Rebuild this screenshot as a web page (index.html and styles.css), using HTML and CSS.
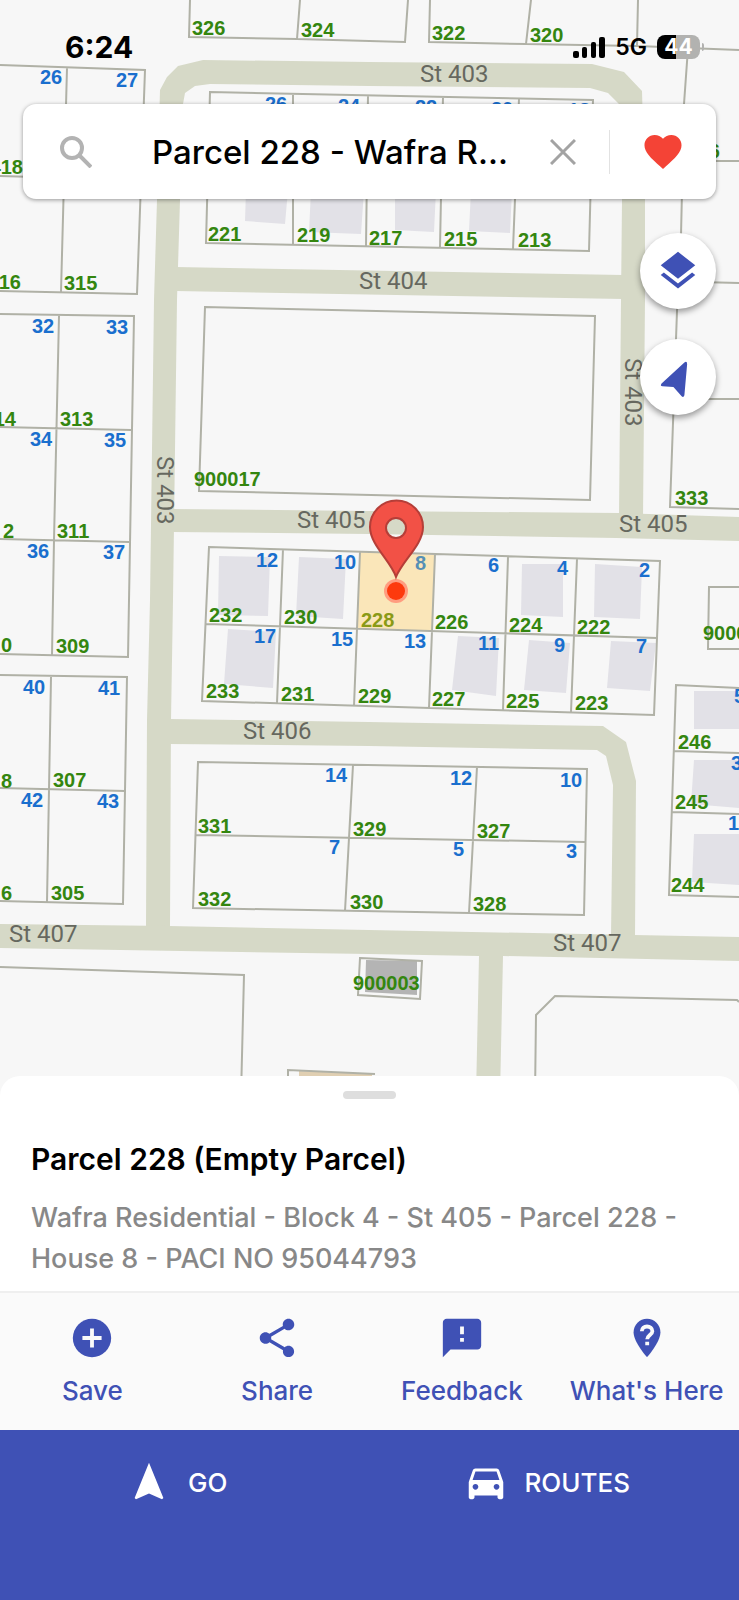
FILE: index.html
```html
<!DOCTYPE html>
<html lang="en">
<head>
<meta charset="utf-8">
<meta name="viewport" content="width=device-width, initial-scale=1">
<title>Parcel 228</title>
<link rel="stylesheet" href="styles.css">
</head>
<body>
<div class="app">
  <main class="map">
    <svg class="map-canvas" viewBox="0 0 739 1096" preserveAspectRatio="xMidYMin slice" role="img" aria-label="Parcel map">
      <g class="road">
        <path d="M160 90 167 77 178 66 203 60 369 62 592 64 624 72 642 91 645 200 645 300 643 518H619L621 300 622 200 619 104 608 93 590 88 369 86 210 84 195 86 185 93 183 104 180 200 177 300 173 600 171 720 170 926H146L147 720 150 600 154 300 157 200Z"/>
        <path d="M176 267 623 275V299L176 291Z"/>
        <path d="M172 509 369 511 619 513 739 517V541L616 538 369 534 172 532Z"/>
        <path d="M169 719 369 722 603 726 626 742 636 781 635 936H611L613 785 606 756 597 750 369 746 169 744Z"/>
        <path d="M0 924 169 926 369 930 634 935 739 937V961L503 956 500 1096H476L479 956 369 954 0 948Z"/>
      </g>
      <g class="building">
        <path d="M246 190H288L285 224 245 221ZM311 190H364L361 234 309 232ZM395 190H436L434 232 395 230ZM471 190H512L510 233 469 231Z"/>
        <path d="M219 556 270 557 268 616 218 615ZM299 557 346 559 343 619 296 616ZM228 629 276 632 273 688 224 684ZM522 564H563V617L521 615ZM595 564 642 567 640 619 594 617ZM458 636 499 638 496 696 452 690ZM529 640 570 643 566 693 524 690ZM611 641 656 643 650 691 607 688Z"/>
        <path d="M694 691H739V729H694ZM694 760H739V808L691 804ZM694 834H739V885L692 882Z"/>
      </g>
      <path class="block" d="M366 960 417 961V995L365 992Z"/>
      <path class="canopy" d="M299 1071 372 1074V1096H299Z"/>
      <path class="selected" d="M360 552 435 555 432 631 357 628Z"/>
      <g class="line">
        <path d="M190 0 189 37 297 39 405 42 408 0M300 0 297 39M430 0 429 42 526 44 637 46 739 50M531 0 526 44M638 0 637 46"/>
        <path d="M688 48 684 104 681 235 677 311 670 507 739 509M700 161H739M700 282 739 283M700 399H739"/>
        <path d="M0 65 145 70 137 294 0 291M67 68 61 292M0 176 141 180"/>
        <path d="M0 314 134 316 128 657 0 654M59 316 54 540 52 655M0 427 131 430M0 539 129 542"/>
        <path d="M0 675 127 677 123 904 0 901M51 677 47 902M0 788 125 791"/>
        <path d="M210 92 593 100 589 251 206 243ZM293 94V245M368 95 366 246M443 97 440 247M519 99 513 249"/>
        <path d="M205 307 595 316 590 500 199 491Z"/>
        <path d="M209 547 660 561 654 715 202 701ZM206 624 657 638M283 549 277 703M360 552 354 706M435 554 429 708M508 557 503 710M577 559 571 712"/>
        <path d="M198 762 587 769 584 915 193 908ZM196 835 585 842M353 765 345 911M477 767 469 913"/>
        <path d="M739 587H709L708 649H739M739 688 676 685 669 895 739 897M674 751 739 753M672 812 739 814"/>
        <path d="M360 958 422 961 420 999 358 995Z"/>
        <path d="M0 967 244 975 241 1096M288 1096V1070L375 1074M535 1096 536 1015 555 996 737 1000 739 1002"/>
      </g>
      <g class="parcel-no">
        <text x="192" y="35">326</text><text x="301" y="37">324</text><text x="432" y="40">322</text><text x="530" y="42">320</text>
        <text x="208" y="241">221</text><text x="297" y="242">219</text><text x="369" y="245">217</text><text x="444" y="246">215</text><text x="518" y="247">213</text>
        <text x="64" y="290">315</text><text x="60" y="426">313</text><text x="57" y="538">311</text><text x="56" y="653">309</text><text x="53" y="787">307</text><text x="51" y="900">305</text>
        <text x="194" y="486">900017</text><text x="675" y="505">333</text><text x="703" y="640">9000</text><text x="353" y="990">900003</text>
        <text x="209" y="622">232</text><text x="284" y="624">230</text><text class="picked-parcel" x="361" y="627">228</text><text x="435" y="629">226</text><text x="509" y="632">224</text><text x="577" y="634">222</text>
        <text x="206" y="698">233</text><text x="281" y="701">231</text><text x="358" y="703">229</text><text x="432" y="706">227</text><text x="506" y="708">225</text><text x="575" y="710">223</text>
        <text x="198" y="833">331</text><text x="353" y="836">329</text><text x="477" y="838">327</text><text x="198" y="906">332</text><text x="350" y="909">330</text><text x="473" y="911">328</text>
        <text x="678" y="749">246</text><text x="675" y="809">245</text><text x="671" y="892">244</text>
      </g>
      <g class="parcel-no anchor-end">
        <text x="23" y="174">418</text><text x="21" y="289">16</text><text x="16" y="426">14</text><text x="14" y="538">2</text><text x="12" y="652">0</text><text x="12" y="788">8</text><text x="12" y="900">6</text><text x="720" y="158">336</text>
      </g>
      <g class="house-no">
        <text x="40" y="84">26</text><text x="116" y="87">27</text><text x="265" y="111">26</text><text x="338" y="113">24</text><text x="415" y="114">22</text><text x="491" y="116">20</text><text x="568" y="117">18</text>
        <text x="32" y="333">32</text><text x="106" y="334">33</text><text x="30" y="446">34</text><text x="104" y="447">35</text><text x="27" y="558">36</text><text x="103" y="559">37</text>
        <text x="23" y="694">40</text><text x="98" y="695">41</text><text x="21" y="807">42</text><text x="97" y="808">43</text>
        <text x="256" y="567">12</text><text x="334" y="569">10</text><text class="picked-house" x="415" y="570">8</text><text x="488" y="572">6</text><text x="557" y="575">4</text><text x="639" y="577">2</text>
        <text x="254" y="643">17</text><text x="331" y="646">15</text><text x="404" y="648">13</text><text x="478" y="650">11</text><text x="554" y="652">9</text><text x="636" y="653">7</text>
        <text x="325" y="782">14</text><text x="450" y="785">12</text><text x="560" y="787">10</text><text x="329" y="854">7</text><text x="453" y="856">5</text><text x="566" y="858">3</text>
        <text x="734" y="703">5</text><text x="731" y="770">3</text><text x="728" y="830">1</text>
      </g>
      <g class="street">
        <text x="420" y="82">St 403</text><text x="359" y="289">St 404</text><text x="297" y="528">St 405</text><text x="619" y="532">St 405</text><text x="243" y="739">St 406</text><text x="9" y="942">St 407</text><text x="553" y="951">St 407</text>
        <text transform="translate(157 456) rotate(90)">St 403</text><text transform="translate(625 358) rotate(90)">St 403</text>
      </g>
      <circle class="halo" cx="396" cy="591" r="12"/>
      <circle class="dot" cx="396" cy="591" r="9"/>
      <path class="pin" fill-rule="evenodd" d="M396 577C391 561 370 545 370 527A26 26 0 0 1 423 527C423 545 402 561 396 577ZM396 518A10 10 0 1 0 396 538 10 10 0 1 0 396 518Z"/>
    </svg>

    <div class="status">
      <span class="clock">6:24</span>
      <span class="status-right">
        <svg class="signal" viewBox="0 0 32 21" aria-hidden="true"><rect y="14" width="6" height="7" rx="2"/><rect x="9" y="10" width="5" height="11" rx="2"/><rect x="18" y="5" width="5" height="16" rx="2"/><rect x="26" width="6" height="21" rx="2"/></svg>
        <span class="network">5G</span>
        <span class="battery">44</span>
      </span>
    </div>

    <form class="search" role="search">
      <button class="icon-button" type="button" aria-label="Search"><svg class="search-icon" viewBox="0 0 32 32"><circle cx="12" cy="12" r="10"/><path d="M19 19 31 31"/></svg></button>
      <input class="search-input" type="text" aria-label="Search places" value="Parcel 228 - Wafra R...">
      <button class="icon-button clear" type="button" aria-label="Clear"><svg class="clear-icon" viewBox="0 0 26 26"><path d="M1 1 25 25M25 1 1 25"/></svg></button>
      <span class="divider"></span>
      <button class="icon-button" type="button" aria-label="Favourite"><svg class="heart" viewBox="2 3 20 18.35"><path d="M12 21.35 10.55 20.03C5.4 15.36 2 12.28 2 8.5 2 5.42 4.42 3 7.5 3c1.74 0 3.41.81 4.5 2.09C13.09 3.81 14.76 3 16.5 3 19.58 3 22 5.42 22 8.5c0 3.78-3.4 6.86-8.55 11.54Z"/></svg></button>
    </form>

    <div class="map-tools">
      <button class="round" type="button" aria-label="Layers"><svg class="tool-icon" viewBox="0 0 24 24"><path d="m11.99 18.54-7.37-5.73L3 14.07l9 7 9-7-1.63-1.27ZM12 16l7.36-5.73L21 9l-9-7-9 7 1.63 1.27Z"/></svg></button>
      <button class="round" type="button" aria-label="My location"><svg class="tool-icon" viewBox="0 0 46 46"><path d="M30 7 5 30Q3 33 6 33L18 34 27 44Q29 46 30 43L33 9Q33 5 30 7Z"/></svg></button>
    </div>
  </main>

  <section class="sheet">
    <div class="place">
      <span class="handle"></span>
      <h1 class="title">Parcel 228 (Empty Parcel)</h1>
      <p class="address">Wafra Residential - Block 4 - St 405 - Parcel 228 - House 8 - PACI NO 95044793</p>
    </div>
    <nav class="actions">
      <button class="action" type="button"><svg class="glyph" viewBox="0 0 24 24"><circle cx="12" cy="12" r="10"/><path class="knock" d="M12 7V17M7 12H17"/></svg>Save</button>
      <button class="action" type="button"><svg class="glyph" viewBox="0 0 24 24"><path d="M18 16.08c-.76 0-1.44.3-1.96.77L8.91 12.7c.05-.23.09-.46.09-.7s-.04-.47-.09-.7l7.05-4.11c.54.5 1.25.81 2.04.81 1.66 0 3-1.34 3-3s-1.34-3-3-3-3 1.34-3 3c0 .24.04.47.09.7L8.04 9.81C7.5 9.31 6.79 9 6 9c-1.66 0-3 1.34-3 3s1.34 3 3 3c.79 0 1.5-.31 2.04-.81l7.12 4.16c-.05.21-.08.43-.08.65 0 1.61 1.31 2.92 2.92 2.92s2.92-1.31 2.92-2.92-1.31-2.92-2.92-2.92Z"/></svg>Share</button>
      <button class="action" type="button"><svg class="glyph" viewBox="0 0 24 24"><path d="M20 2H4C2.9 2 2.01 2.9 2.01 4L2 22l4-4h14c1.1 0 2-.9 2-2V4c0-1.1-.9-2-2-2Zm-7 12h-2v-2h2v2Zm0-4h-2V6h2v4Z"/></svg>Feedback</button>
      <button class="action" type="button"><svg class="glyph" viewBox="0 0 24 24"><path d="M12 2C8.13 2 5 5.13 5 9c0 5.25 7 13 7 13s7-7.75 7-13c0-3.87-3.13-7-7-7Z"/><path class="knock" d="M9.3 8.5C9.3 6.8 10.5 6 12 6S14.8 6.9 14.8 8.5C14.8 10.4 12.1 10.6 12.1 12.7M12.1 13.9V15.8"/></svg>What's Here</button>
    </nav>
  </section>

  <footer class="travel">
    <button class="travel-button" type="button"><svg class="glyph" viewBox="0 0 24 24"><path d="M12 2 4.5 20.29 5.21 21 12 18 18.79 21 19.5 20.29Z"/></svg>GO</button>
    <button class="travel-button" type="button"><svg class="glyph" viewBox="0 0 24 24"><path d="M18.92 6.01C18.72 5.42 18.16 5 17.5 5h-11c-.66 0-1.21.42-1.42 1.01L3 12v8c0 .55.45 1 1 1h1c.55 0 1-.45 1-1v-1h12v1c0 .55.45 1 1 1h1c.55 0 1-.45 1-1v-8ZM6.5 16c-.83 0-1.5-.67-1.5-1.5S5.67 13 6.5 13s1.5.67 1.5 1.5S7.33 16 6.5 16Zm11 0c-.83 0-1.5-.67-1.5-1.5s.67-1.5 1.5-1.5 1.5.67 1.5 1.5-.67 1.5-1.5 1.5ZM5 11l1.5-4.5h11L19 11Z"/></svg>ROUTES</button>
  </footer>
</div>
</body>
</html>
```
FILE: styles.css
```css
* { box-sizing: border-box; }
body { margin: 0; font-family: Inter, "Liberation Sans", sans-serif; background: #fff; }
button, input { font: inherit; border: 0; margin: 0; padding: 0; background: none; color: inherit; }
button { cursor: pointer; }
svg { display: block; flex: none; }

.app { display: flex; flex-direction: column; min-height: 100vh; }

/* Map */
.map { position: relative; flex: 1; min-height: 440px; overflow: hidden; background: #f7f7f7; }
.map-canvas { position: absolute; inset: 0; width: 100%; height: 100%; }
.road { fill: #d6d9c7; }
.building { fill: #e2e1e7; }
.block { fill: #b4b4b4; }
.canopy { fill: #e0cfb2; }
.selected { fill: #fae6b9; }
.line { fill: none; stroke: #b0b1a6; stroke-width: 2; }
.parcel-no, .house-no { font: bold 20px "Liberation Sans", sans-serif; }
.parcel-no { fill: #34860f; }
.house-no { fill: #1a6fce; }
.anchor-end { text-anchor: end; }
.picked-parcel { fill: #8a9a16; }
.picked-house { fill: #568fb5; }
.street { font: 24px Roboto, sans-serif; fill: #66685f; }
.pin { fill: #f25146; stroke: #b53e38; stroke-width: 2; }
.dot { fill: #fd3a0d; }
.halo { fill: #ff9d80; }

/* Status bar */
.status { position: relative; display: flex; justify-content: space-between; align-items: center; height: 104px; padding: 0 39px 10px 65px; color: #000; }
.clock { font-size: 30px; font-weight: 700; }
.status-right { display: flex; align-items: center; gap: 10px; }
.signal { width: 32px; height: 21px; }
.network { font-size: 23px; font-weight: 600; }
.battery { position: relative; width: 43px; height: 24px; border-radius: 8px; background: linear-gradient(90deg, #000 45%, #b2b2b0 45%); color: #fff; font-size: 21px; font-weight: 700; line-height: 24px; text-align: center; }
.battery::after { content: ""; position: absolute; top: 8px; right: -4px; width: 2px; height: 8px; border-radius: 0 2px 2px 0; background: #b2b2b0; }

/* Search */
.search { position: relative; display: flex; align-items: center; height: 95px; margin: 0 23px; border-radius: 13px; background: #fff; box-shadow: 0 1px 4px rgba(0, 0, 0, .4); }
.icon-button { display: flex; flex: none; align-items: center; justify-content: center; width: 106px; height: 95px; }
.clear { width: 92px; }
.search-input { flex: 1; min-width: 0; height: 95px; padding-left: 23px; font-size: 33px; font-weight: 500; color: #000; outline: 0; }
.search-icon { width: 32px; height: 32px; fill: none; stroke: #b3b3b3; stroke-width: 4; }
.clear-icon { width: 26px; height: 26px; fill: none; stroke: #a3a3a3; stroke-width: 3; }
.divider { width: 1px; height: 44px; background: #e2e2e2; }
.heart { width: 38px; height: 34px; fill: #f44336; }

/* Floating map buttons */
.map-tools { position: relative; display: flex; flex-direction: column; align-items: flex-end; gap: 30px; padding: 34px 23px; }
.round { display: flex; align-items: center; justify-content: center; width: 76px; height: 76px; border-radius: 50%; background: #fff; box-shadow: 0 3px 6px rgba(0, 0, 0, .4); }
.tool-icon { width: 46px; height: 46px; fill: #3f51b5; }
.round + .round .tool-icon { width: 42px; height: 42px; }

/* Bottom sheet */
.sheet { position: relative; margin-top: -20px; border-radius: 20px 20px 0 0; background: #fff; }
.place { display: flex; flex-direction: column; padding: 15px 31px 12px; }
.handle { align-self: center; width: 53px; height: 8px; border-radius: 4px; background: #dedede; }
.title { margin: 40px 0 0; font-size: 30px; font-weight: 600; line-height: 40px; color: #000; }
.address { margin: 18px 0 0; font-size: 27px; font-weight: 500; line-height: 41px; color: #888; }
.actions { display: grid; grid-template-columns: repeat(4, 1fr); border-top: 2px solid #efefef; background: #fafafa; }
.action { display: flex; flex-direction: column; align-items: center; gap: 14px; padding: 22px 0 23px; font-size: 26px; font-weight: 500; line-height: 32px; white-space: nowrap; color: #3f51b5; }
.glyph { width: 46px; height: 46px; fill: currentColor; }
.knock { fill: none; stroke: #fafafa; stroke-width: 2; }

/* Travel bar */
.travel { display: grid; grid-template-columns: 1fr 1fr; align-items: start; min-height: 170px; background: #3f51b5; color: #fff; }
.travel-button { display: flex; align-items: center; justify-content: center; gap: 16px; padding: 29px 16px 29px 0; font-size: 26px; font-weight: 500; }
```
